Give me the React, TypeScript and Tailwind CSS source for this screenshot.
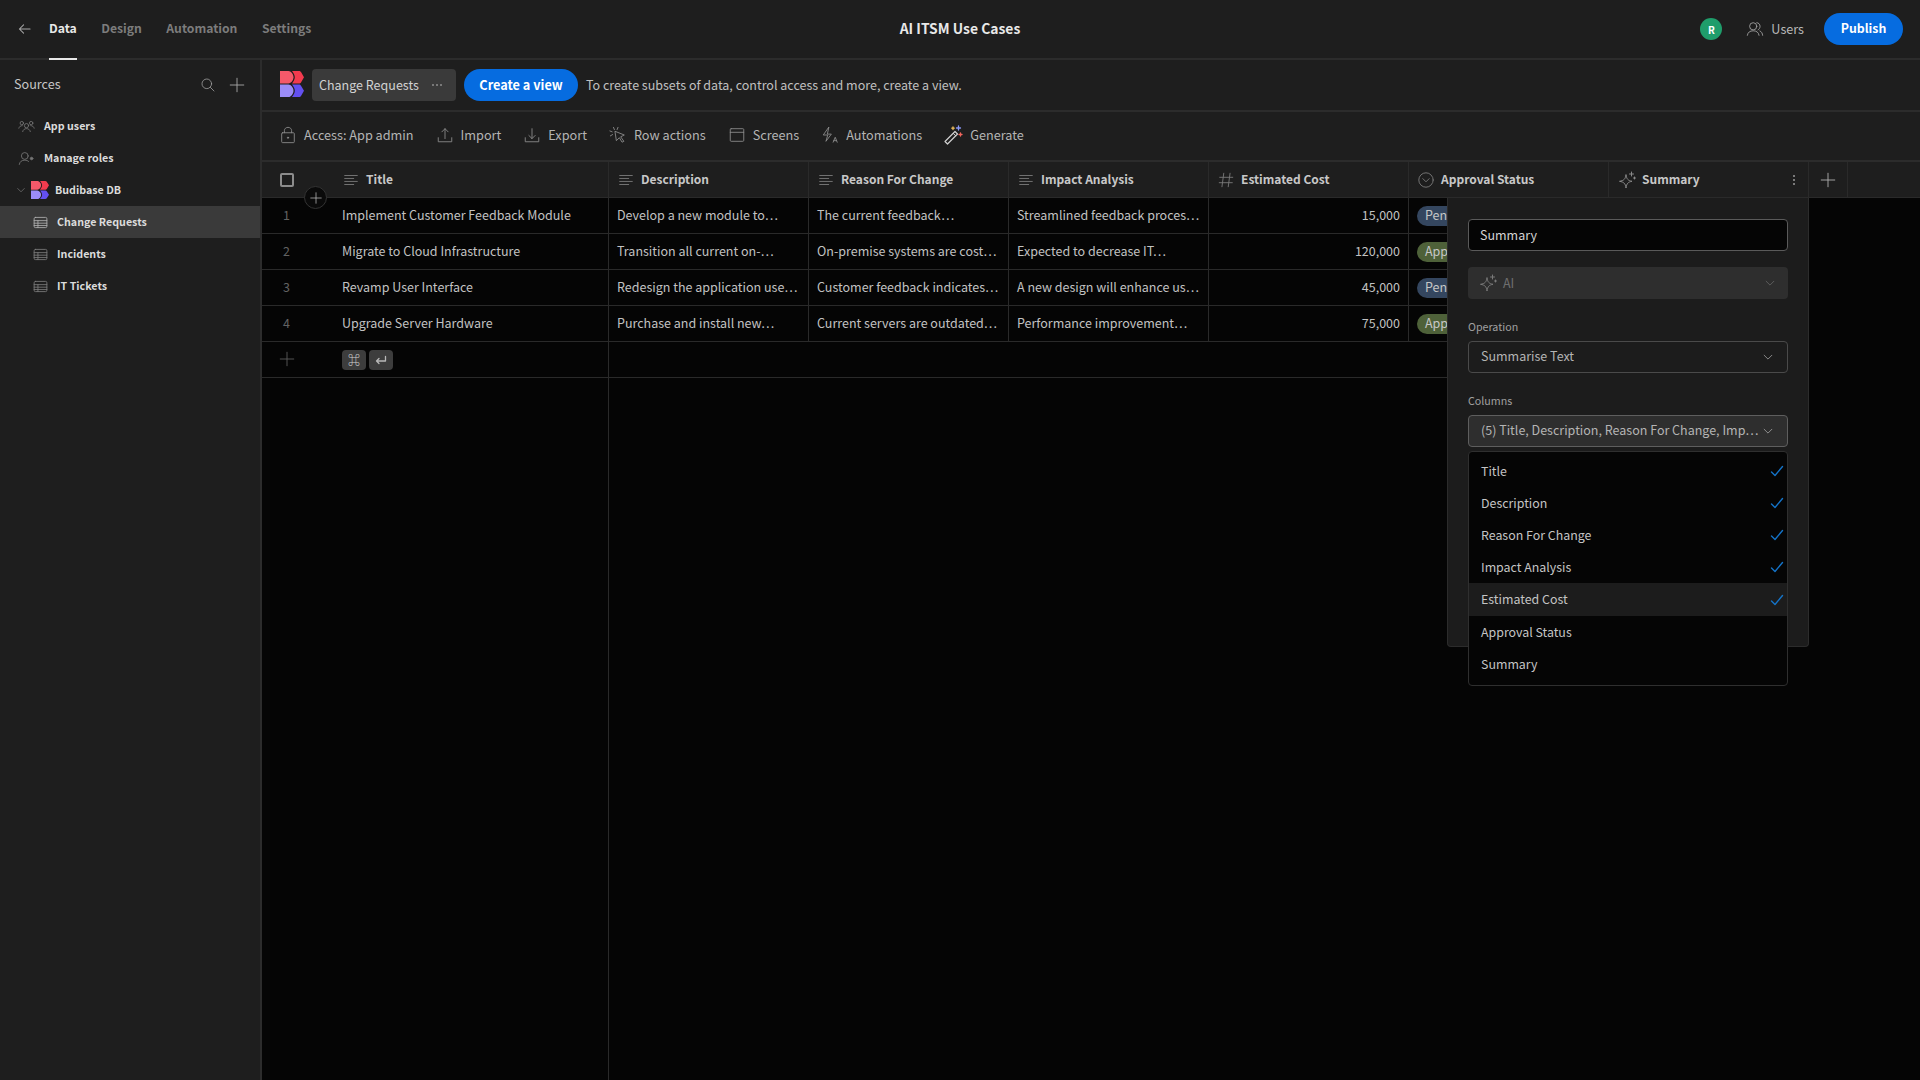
import React from "react";

const font = { fontFamily: '"Noto Sans CJK SC", "Source Sans Pro", "Noto Sans", sans-serif' };

type IP = { className?: string };
const S = ({ children, className, vb = "0 0 20 20" }: { children: React.ReactNode; className?: string; vb?: string }) => (
  <svg viewBox={vb} fill="none" stroke="currentColor" strokeWidth={1} strokeLinecap="round" strokeLinejoin="round" className={className}>
    {children}
  </svg>
);

const Logo = ({ className }: IP) => (
  <svg viewBox="0 0 24 24" preserveAspectRatio="none" className={className}>
    <path d="M0 0H8.500C11 0 13.500 3 13.500 5.800C13.500 8.500 11 11.500 8.500 11.500H0Z" fill="#f5596a" />
    <path d="M12 0H19C20 0 20.500 0.500 21 1L24 5.800L21 10.500C20.500 11 20 11.500 19 11.500H12C13.500 9.800 14.800 7.800 14.800 5.800C14.800 3.800 13.500 1.700 12 0Z" fill="#f23b4e" />
    <path d="M0 12.500H8.500C11 12.500 13.500 15.500 13.500 18.200C13.500 21 11 24 8.500 24H0Z" fill="#9b8cf7" />
    <path d="M12 12.500H19C20 12.500 20.500 13 21 13.500L24 18.200L21 23C20.500 23.500 20 24 19 24H12C13.500 22.300 14.800 20.200 14.800 18.200C14.800 16.200 13.500 14.200 12 12.500Z" fill="#6350f0" />
  </svg>
);
const Plus = ({ className }: IP) => (
  <S className={className}><path d="M10 2.500V17.500M2.500 10H17.500" /></S>
);
const Chevron = ({ className }: IP) => (
  <S className={className}><path d="M4.500 7.500L10 13L15.500 7.500" /></S>
);
const Lines = ({ className }: IP) => (
  <S className={className}><path d="M3 5H17M3 8.300H13M3 11.600H17M3 15H13" /></S>
);
const Sparkle = ({ className }: IP) => (
  <S className={className}>
    <path d="M9 5C9.600 9 11 10.600 15 11.300C11 12 9.600 13.600 9 18C8.400 13.600 7 12 2.500 11.300C7 10.600 8.400 9 9 5Z" />
    <path d="M14.500 2V6M12.500 4H16.500M17.500 7V9M16.500 8H18.500" />
  </S>
);
const TableIco = ({ className }: IP) => (
  <S className={className}>
    <rect x="2.500" y="4" width="15" height="12" rx="1.500" />
    <path d="M2.500 7.800H17.500M2.500 10.800H17.500M2.500 13.600H17.500M7 7.800V16" />
  </S>
);
const Check = () => (
  <S className="h-[14px] w-[14px] text-[#1473c8]" vb="0 0 14 14"><path d="M1.500 8L5 11.500L12.500 2.500" strokeWidth={1.400} /></S>
);

function SideRow({ icon, label, active, pl, gap }: { icon: React.ReactNode; label: string; active?: boolean; pl: string; gap: string }) {
  return (
    <div className={`flex h-8 items-center ${pl} ${gap} ${active ? "bg-[#3a3a3a]" : ""}`}>
      {icon}
      <span className="text-[10.7px] font-semibold leading-none text-[#dcdcdc]">{label}</span>
    </div>
  );
}

function Tool({ icon, label, w }: { icon: React.ReactNode; label: string; w: string }) {
  return (
    <div className={`flex items-center gap-[7px] ${w}`}>
      {icon}
      <span className="text-[12.7px] text-[#b4b4b4]">{label}</span>
    </div>
  );
}

const colIcon = "h-[18px] w-[18px] text-[#7a7a7a]";
const columns = [
  { name: "Description", icon: <Lines className={colIcon} /> },
  { name: "Reason For Change", icon: <Lines className={colIcon} /> },
  { name: "Impact Analysis", icon: <Lines className={colIcon} /> },
  {
    name: "Estimated Cost",
    icon: (
      <S className={colIcon}><path d="M7.500 2.500L5.500 17.500M14.500 2.500L12.500 17.500M3 7H17.500M2.500 13H17" /></S>
    ),
  },
  {
    name: "Approval Status",
    icon: (
      <S className={colIcon}><circle cx="10" cy="10" r="8" /><path d="M6.500 8.500L10 12L13.500 8.500" /></S>
    ),
  },
];

const rows = [
  { t: "Implement Customer Feedback Module", d: "Develop a new module to…", r: "The current feedback…", i: "Streamlined feedback proces…", c: "15,000", s: "Pending", bg: "bg-[#34465f]" },
  { t: "Migrate to Cloud Infrastructure", d: "Transition all current on-…", r: "On-premise systems are cost…", i: "Expected to decrease IT…", c: "120,000", s: "Approved", bg: "bg-[#4e6139]" },
  { t: "Revamp User Interface", d: "Redesign the application use…", r: "Customer feedback indicates…", i: "A new design will enhance us…", c: "45,000", s: "Pending", bg: "bg-[#34465f]" },
  { t: "Upgrade Server Hardware", d: "Purchase and install new…", r: "Current servers are outdated…", i: "Performance improvement…", c: "75,000", s: "Approved", bg: "bg-[#4e6139]" },
];

const Cell = ({ children }: { children: React.ReactNode }) => (
  <div className="flex h-full w-[200px] shrink-0 items-center overflow-hidden whitespace-nowrap border-r border-[#2a2a2a] px-[8px] text-[12.5px] text-[#c2c2c2]">
    {children}
  </div>
);

const menu = ["Title", "Description", "Reason For Change", "Impact Analysis", "Estimated Cost", "Approval Status", "Summary"];

export default function App() {
  return (
    <div style={font} className="flex h-[1080px] w-[1920px] flex-col overflow-hidden bg-[#1e1e1e] text-[#d0d0d0]">
      {/* top bar */}
      <header className="relative flex h-[60px] shrink-0 items-center border-b-2 border-[#2c2c2c] pl-[18px] pr-[17px]">
        <S className="mr-[18px] h-[14px] w-[13px] text-[#a8a8a8]" vb="0 0 14 14"><path d="M13 7H1.500M6 2.500L1.500 7L6 11.500" strokeWidth={1.100} /></S>
        <nav className="flex h-full items-center gap-[24.5px]">
          <div className="relative flex h-full items-center pb-[2px] text-[12.2px] font-semibold text-[#e8e8e8]">
            Data
            <div className="absolute bottom-[-2px] left-0 h-[2px] w-[28px] bg-[#e8e8e8]" />
          </div>
          <div className="pb-[2px] text-[12.2px] font-semibold text-[#7c7c7c]">Design</div>
          <div className="pb-[2px] text-[12.2px] font-semibold text-[#7c7c7c]">Automation</div>
          <div className="pb-[2px] text-[12.2px] font-semibold text-[#7c7c7c]">Settings</div>
        </nav>
        <div className="absolute left-0 right-0 top-0 flex h-[57px] items-center justify-center text-[13.9px] font-semibold text-[#e8e8e8]">
          AI ITSM Use Cases
        </div>
        <div className="ml-auto flex items-center">
          <div className="flex h-[22px] w-[22px] items-center justify-center rounded-full bg-[#1f9d6b] text-[10px] font-bold text-white">R</div>
          <S className="ml-[24px] h-[18px] w-[18px] text-[#a0a0a0]">
            <circle cx="8" cy="7" r="4" /><path d="M1.500 17C2 13.500 4.500 12 8 12C11.500 12 14 13.500 14.500 17" /><path d="M12 3C14 3 15.600 4.800 15.600 7C15.600 8.800 14.800 10.200 13.400 11M15.500 12.200C17.300 13 18.300 14.800 18.500 17" />
          </S>
          <span className="ml-[7px] text-[12.6px] text-[#b8b8b8]">Users</span>
          <button className="ml-[20px] flex h-8 w-[79px] items-center justify-center rounded-2xl bg-[#066ce0] pb-[1px] text-[12.3px] font-bold text-white">Publish</button>
        </div>
      </header>

      <div className="flex min-h-0 flex-1">
        {/* sidebar */}
        <aside className="w-[262px] shrink-0 border-r-2 border-[#2c2c2c]">
          <div className="flex h-[50px] items-center pb-[1px] pl-[14px] pr-[14px]">
            <span className="text-[12.6px] text-[#c6c6c6]">Sources</span>
            <S className="ml-auto h-[16px] w-[16px] text-[#a0a0a0]"><circle cx="8.500" cy="8.500" r="6" /><path d="M13 13L17.500 17.500" /></S>
            <Plus className="ml-[12px] h-[18px] w-[18px] text-[#a8a8a8]" />
          </div>
          <div>
            <SideRow
              pl="pl-[18px]"
              gap="gap-[9px]"
              label="App users"
              icon={
                <S className="h-[17px] w-[17px] text-[#767676]">
                  <circle cx="10" cy="9" r="2.500" /><path d="M5.500 16C6 13.500 8 12.500 10 12.500C12 12.500 14 13.500 14.500 16" /><circle cx="4.500" cy="6" r="2" /><circle cx="15.500" cy="6" r="2" /><path d="M1 12C1.500 10 3 9 5 9M19 12C18.500 10 17 9 15 9" />
                </S>
              }
            />
            <SideRow
              pl="pl-[18px]"
              gap="gap-[9px]"
              label="Manage roles"
              icon={
                <S className="h-[17px] w-[17px] text-[#767676]">
                  <circle cx="8" cy="7" r="4" /><path d="M1.500 17C2 13.500 4.500 12 8 12C10 12 11.500 12.500 12.500 13.500" /><circle cx="16" cy="10" r="1.500" fill="currentColor" />
                </S>
              }
            />
            <div className="flex h-8 items-center pl-[15px]">
              <Chevron className="h-[12px] w-[12px] text-[#8a8a8a]" />
              <Logo className="ml-[4px] h-[18px] w-[18px]" />
              <span className="ml-[6px] text-[10.7px] font-semibold leading-none text-[#dcdcdc]">Budibase DB</span>
            </div>
            <SideRow pl="pl-[32px]" gap="gap-[8px]" active label="Change Requests" icon={<TableIco className="h-[17px] w-[17px] text-[#b0b0b0]" />} />
            <SideRow pl="pl-[32px]" gap="gap-[8px]" label="Incidents" icon={<TableIco className="h-[17px] w-[17px] text-[#7c7c7c]" />} />
            <SideRow pl="pl-[32px]" gap="gap-[8px]" label="IT Tickets" icon={<TableIco className="h-[17px] w-[17px] text-[#7c7c7c]" />} />
          </div>
        </aside>

        <main className="relative flex min-w-0 flex-1 flex-col">
          {/* source bar */}
          <div className="flex h-[52px] shrink-0 items-center border-b-2 border-[#2c2c2c] pl-[18px]">
            <Logo className="mb-[3px] h-[26px] w-6" />
            <div className="ml-2 flex h-8 w-[144px] items-center rounded bg-[#3a3a3a] pl-[7px]">
              <span className="whitespace-nowrap text-[12.5px] text-[#d2d2d2]">Change Requests</span>
              <span className="ml-[13px] flex gap-[2px]">
                <i className="h-[2px] w-[2px] rounded-full bg-[#8e8e8e]" />
                <i className="h-[2px] w-[2px] rounded-full bg-[#8e8e8e]" />
                <i className="h-[2px] w-[2px] rounded-full bg-[#8e8e8e]" />
              </span>
            </div>
            <button className="ml-2 flex h-8 w-[114px] items-center justify-center rounded-2xl bg-[#066ce0] pb-[1px] text-[12.7px] font-bold text-white">Create a view</button>
            <span className="ml-[8px] text-[12.5px] text-[#c0c0c0]">To create subsets of data, control access and more, create a view.</span>
          </div>

          {/* toolbar */}
          <div className="flex h-[50px] shrink-0 items-center border-b-2 border-[#2c2c2c] pb-[2px] pl-[17px]">
            <Tool w="mr-[22px]" label="Access: App admin" icon={<S className="h-[18px] w-[18px] text-[#8a8a8a]"><rect x="3" y="7.500" width="14" height="11" rx="1" /><path d="M6 7.500V5C6 3 7.800 1.500 10 1.500C12.200 1.500 14 3 14 5V7.500" /><circle cx="10" cy="13" r="0.700" fill="currentColor" /></S>} />
            <Tool w="mr-[22px]" label="Import" icon={<S className="h-[18px] w-[18px] text-[#8a8a8a]"><path d="M2.500 13V17.500H17.500V13M10 14V3M6.500 6.500L10 3L13.500 6.500" /></S>} />
            <Tool w="mr-[22px]" label="Export" icon={<S className="h-[18px] w-[18px] text-[#8a8a8a]"><path d="M2.500 13V17.500H17.500V13M10 3V14M6.500 10.500L10 14L13.500 10.500" /></S>} />
            <Tool w="mr-[22px]" label="Row actions" icon={<S className="h-[18px] w-[18px] text-[#8a8a8a]"><path d="M7 6L17 10L13 12L16.500 17L14.500 18L11.500 13L8.500 16Z" /><path d="M5 1.500L6 4M1 5.500L3.500 6.500M10 1.500L9 4M1.500 11L4 9.500" /></S>} />
            <Tool w="mr-[22px]" label="Screens" icon={<S className="h-[18px] w-[18px] text-[#8a8a8a]"><rect x="2.500" y="3" width="15" height="14" rx="1" /><path d="M2.500 7H17.500" /></S>} />
            <Tool w="mr-[21px]" label="Automations" icon={<S className="h-[18px] w-[18px] text-[#8a8a8a]"><path d="M8.500 1.500L2.500 10H7.500L5.500 17L11.500 9H7.500Z" /><path d="M13.500 18L15.800 12.500L18 18M14.200 16.300H17.400" /></S>} />
            <Tool
              w=""
              label="Generate"
              icon={
                <S className="h-[20px] w-[20px] text-[#d0d0d0]">
                  <path d="M2 16.500L12 6.500L14.500 9L4.500 19Z" strokeWidth={1.200} />
                  <path d="M10.200 8.300L12.700 10.800" />
                  <path d="M15.500 1V5M13.500 3H17.500" stroke="#8a98f5" strokeWidth={1.300} />
                  <path d="M17.500 8V11M16 9.500H19" stroke="#f0655d" strokeWidth={1.300} />
                  <path d="M10 2V4.500M8.800 3.200H11.200" stroke="#f0c05d" strokeWidth={1.300} />
                </S>
              }
            />
          </div>

          {/* grid */}
          <div className="flex min-h-0 flex-1 bg-[#050505]">
            {/* sticky column */}
            <div className="w-[347px] shrink-0 border-r border-[#2a2a2a]">
              <div className="flex h-9 items-center border-b border-[#2a2a2a] bg-[#1e1e1e]">
                <div className="w-[71px] pl-[18px]">
                  <div className="h-[14px] w-[14px] rounded-[2px] border-2 border-[#8c8c8c]" />
                </div>
                <Lines className="ml-[9px] h-[18px] w-[18px] text-[#7a7a7a]" />
                <span className="mb-[1px] ml-[6px] text-[12px] font-semibold text-[#c8c8c8]">Title</span>
              </div>
              {rows.map((r, i) => (
                <div key={r.t} className="flex h-9 items-center border-b border-[#2a2a2a]">
                  <div className="w-[71px] pr-[22px] text-center text-[12.5px] text-[#626262]">{i + 1}</div>
                  <div className="pl-[9px] text-[12.5px] text-[#c2c2c2]">{r.t}</div>
                </div>
              ))}
              <div className="flex h-9 items-center border-b border-[#2a2a2a]">
                <div className="flex w-[71px] justify-center pr-[22px]">
                  <Plus className="mb-[1px] h-[18px] w-[18px] text-[#5c5c5c]" />
                </div>
                <div className="ml-[9px] flex gap-[3px]">
                  <span className="flex h-5 w-6 items-center justify-center rounded bg-[#3d3d3d] text-xs font-bold text-[#d0d0d0]">⌘</span>
                  <span className="flex h-5 w-6 items-center justify-center rounded bg-[#3d3d3d]">
                    <S className="h-[12px] w-[12px] text-[#b8b8b8]" vb="0 0 12 12"><path d="M10.500 2.500V7H1.500M4 4.500L1.500 7L4 9.500" strokeWidth={1.300} /></S>
                  </span>
                </div>
              </div>
            </div>

            {/* scrolling columns */}
            <div className="min-w-0 flex-1">
              <div className="flex h-9 items-stretch border-b border-[#2a2a2a] bg-[#1e1e1e]">
                {columns.map((c) => (
                  <div key={c.name} className="flex w-[200px] shrink-0 items-center gap-[6px] border-r border-[#2a2a2a] pl-[8px]">
                    {c.icon}
                    <span className="mb-[1px] text-[12px] font-semibold text-[#c8c8c8]">{c.name}</span>
                  </div>
                ))}
                <div className="flex w-[200px] shrink-0 items-center gap-[5px] border-r border-[#2a2a2a] pl-[8px] pr-[13px]">
                  <Sparkle className="h-[20px] w-[20px] text-[#8a8a8a]" />
                  <span className="mb-[1px] text-[12px] font-semibold text-[#c8c8c8]">Summary</span>
                  <span className="ml-auto flex flex-col gap-[2px]">
                    <i className="h-[2px] w-[2px] bg-[#7a7a7a]" />
                    <i className="h-[2px] w-[2px] bg-[#7a7a7a]" />
                    <i className="h-[2px] w-[2px] bg-[#7a7a7a]" />
                  </span>
                </div>
                <div className="flex w-[39px] shrink-0 items-center justify-center border-r border-[#2a2a2a]">
                  <Plus className="h-[18px] w-[18px] text-[#b0b0b0]" />
                </div>
              </div>
              {rows.map((r) => (
                <div key={r.t} className="flex h-9 w-[1200px] border-b border-[#2a2a2a]">
                  <Cell>{r.d}</Cell>
                  <Cell>{r.r}</Cell>
                  <Cell>{r.i}</Cell>
                  <Cell><span className="w-full text-right">{r.c}</span></Cell>
                  <Cell>
                    <span className={`flex h-5 items-center rounded-[10px] px-[8px] text-[12.5px] text-[#c6c6c6] ${r.bg}`}>{r.s}</span>
                  </Cell>
                  <Cell>{""}</Cell>
                </div>
              ))}
              <div className="h-9 w-[1200px] border-b border-[#2a2a2a]" />
            </div>
          </div>

          {/* add row bubble */}
          <div className="absolute left-[42px] top-[126px] flex h-[23px] w-[23px] items-center justify-center rounded-full border border-[#333333] bg-[#0a0a0a]">
            <Plus className="h-[14px] w-[14px] text-[#c4c4c4]" />
          </div>

          {/* column editor popover */}
          <div className="absolute left-[1185px] top-[138px] h-[449px] w-[362px] rounded-b border border-t-0 border-[#2c2c2c] bg-[#1c1c1c] px-[20px] pt-[21px]">
            <div className="flex h-8 items-center rounded border border-[#5a5a5a] bg-[#050505] px-[11px] text-[12.5px] text-[#d4d4d4]">Summary</div>
            <div className="mt-4 flex h-8 items-center rounded bg-[#2e2e2e] pl-[10px] pr-[11px] text-[12.5px] text-[#6e6e6e]">
              <Sparkle className="mr-[5px] h-[20px] w-[20px] text-[#7a7a7a]" />
              AI
              <Chevron className="ml-auto h-[14px] w-[14px] text-[#6e6e6e]" />
            </div>
            <div className="mt-5 text-[10.7px] leading-4 text-[#a0a0a0]">Operation</div>
            <div className="mt-[6px] flex h-8 items-center rounded border border-[#4a4a4a] px-[12px] pb-[1px] text-[12.5px] text-[#b4b4b4]">
              Summarise Text
              <Chevron className="ml-auto h-[14px] w-[14px] text-[#b4b4b4]" />
            </div>
            <div className="mt-5 text-[10.7px] leading-4 text-[#a0a0a0]">Columns</div>
            <div className="mt-[6px] flex h-8 items-center rounded border border-[#5e5e5e] bg-[#2e2e2e] px-[12px] pb-[1px] text-[12.5px] text-[#b4b4b4]">
              <span className="whitespace-nowrap">(5) Title, Description, Reason For Change, Imp…</span>
              <Chevron className="ml-auto h-[14px] w-[14px] text-[#b4b4b4]" />
            </div>
          </div>

          {/* column picker menu */}
          <div className="absolute left-[1206px] top-[391px] h-[235px] w-[320px] rounded border border-[#2f2f2f] bg-[#050505] pt-[3px]">
            {menu.map((m, i) => (
              <div key={m} className={`flex items-center pl-[12px] pr-[3px] text-[12.4px] text-[#c4c4c4] ${i === 4 ? "h-[33px] bg-[#1c1c1c]" : "h-8"}`}>
                {m}
                {i < 5 && <span className="ml-auto"><Check /></span>}
              </div>
            ))}
          </div>
        </main>
      </div>
    </div>
  );
}
